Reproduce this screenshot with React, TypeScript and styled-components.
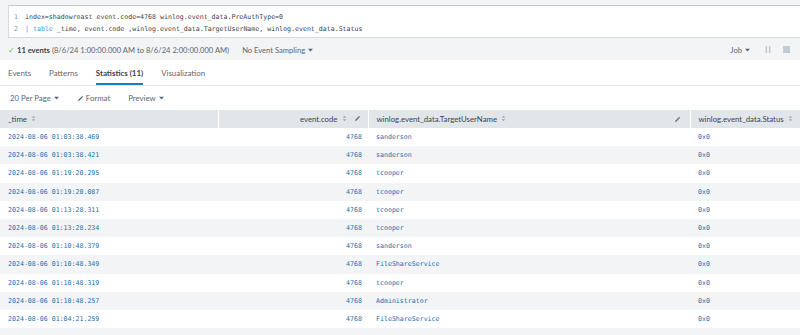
import styled, { createGlobalStyle } from 'styled-components';

const GlobalStyle = createGlobalStyle`
    html, body { margin: 0; padding: 0; background: #f2f4f5; }
    body { font-family: Lato, "Open Sans", sans-serif; color: #3c444d; }
`

const MONO = `"DejaVu Sans Mono", "Liberation Mono", monospace`

type Row = { time: string; code: string; user: string; status: string }

const rows: Row[] = [
    { time: '2024-08-06 01:03:38.469', code: '4768', user: 'sanderson', status: '0x0' },
    { time: '2024-08-06 01:03:38.421', code: '4768', user: 'sanderson', status: '0x0' },
    { time: '2024-08-06 01:19:20.295', code: '4768', user: 'tcooper', status: '0x0' },
    { time: '2024-08-06 01:19:20.087', code: '4768', user: 'tcooper', status: '0x0' },
    { time: '2024-08-06 01:13:28.311', code: '4768', user: 'tcooper', status: '0x0' },
    { time: '2024-08-06 01:13:28.234', code: '4768', user: 'tcooper', status: '0x0' },
    { time: '2024-08-06 01:10:48.379', code: '4768', user: 'sanderson', status: '0x0' },
    { time: '2024-08-06 01:10:48.349', code: '4768', user: 'FileShareService', status: '0x0' },
    { time: '2024-08-06 01:10:48.319', code: '4768', user: 'tcooper', status: '0x0' },
    { time: '2024-08-06 01:10:48.257', code: '4768', user: 'Administrator', status: '0x0' },
    { time: '2024-08-06 01:04:21.259', code: '4768', user: 'FileShareService', status: '0x0' },
]

const Caret = () => (
    <svg width="5" height="4" viewBox="0 0 6 4" style={{ marginLeft: 3 }}>
        <path d="M0 0.5 L6 0.5 L3 3.8 Z" fill="currentColor" />
    </svg>
)

const SortIcon = () => (
    <svg width="5" height="7" viewBox="0 0 5 7" style={{ marginLeft: 4 }}>
        <path d="M0.7 2.8 L2.5 0.8 L4.3 2.8 Z M0.7 4.2 L2.5 6.2 L4.3 4.2 Z" fill="#a0a8b0" />
    </svg>
)

const Pencil = () => (
    <svg width="7" height="7" viewBox="0 0 7 7">
        <path d="M1 6 L1.3 4.8 L5.2 0.9 L6.1 1.8 L2.2 5.7 Z" fill="#5c6773" />
    </svg>
)

export default function App() {
    return (
        <Page>
            <GlobalStyle />
            <SearchBox>
                <CodeLine><LineNo>1</LineNo>index=shadowroast event.code=4768 winlog.event_data.PreAuthType=0</CodeLine>
                <CodeLine><LineNo>2</LineNo><Pipe>|</Pipe> <Cmd>table</Cmd> _time, event.code ,winlog.event_data.TargetUserName, winlog.event_data.Status</CodeLine>
            </SearchBox>

            <StatusBar>
                <Check>✓</Check>
                <b>11 events</b>&nbsp;<Muted>(8/6/24 1:00:00.000 AM to 8/6/24 2:00:00.000 AM)</Muted>
                <Sampling>No Event Sampling<Caret /></Sampling>
                <Spacer />
                <JobMenu>Job<Caret /></JobMenu>
                <CtrlIcon>
                    <svg width="6" height="7" viewBox="0 0 6 7"><rect x="0.5" y="0" width="1.6" height="7" fill="#c3cbd4" /><rect x="3.9" y="0" width="1.6" height="7" fill="#c3cbd4" /></svg>
                </CtrlIcon>
                <CtrlIcon>
                    <svg width="7" height="7" viewBox="0 0 7 7"><rect x="0" y="0" width="7" height="7" fill="#c3cbd4" /></svg>
                </CtrlIcon>
            </StatusBar>

            <Tabs>
                <Tab>Events</Tab>
                <Tab>Patterns</Tab>
                <Tab $active>Statistics (11)</Tab>
                <Tab>Visualization</Tab>
            </Tabs>

            <Toolbar>
                <ToolItem>20 Per Page<Caret /></ToolItem>
                <ToolItem><Pencil />&nbsp;Format</ToolItem>
                <ToolItem>Preview<Caret /></ToolItem>
            </Toolbar>

            <Table>
                <thead>
                    <tr>
                        <Th $w={218}>_time<SortIcon /></Th>
                        <Th $w={150} $right>event.code<SortIcon /><EditGap><Pencil /></EditGap></Th>
                        <Th $w={322}>
                            <HeadFlex>
                                <span>winlog.event_data.TargetUserName<SortIcon /></span>
                                <Pencil />
                            </HeadFlex>
                        </Th>
                        <Th $w={110}>winlog.event_data.Status<SortIcon /></Th>
                    </tr>
                </thead>
                <tbody>
                    {rows.map((r, i) => (
                        <Tr key={i} $odd={i % 2 === 1}>
                            <Td>{r.time}</Td>
                            <Td $right>{r.code}</Td>
                            <Td>{r.user}</Td>
                            <Td>{r.status}</Td>
                        </Tr>
                    ))}
                </tbody>
            </Table>
        </Page>
    )
}

const Page = styled.div`
    width: 800px;
    height: 335px;
    overflow: hidden;
    padding-top: 5px;
    box-sizing: border-box;
`

const SearchBox = styled.div`
    margin-left: 8px;
    height: 33px;
    box-sizing: border-box;
    background: #fff;
    border-top: 1px solid #c3cbd4;
    border-bottom: 1px solid #d4dae0;
    border-left: 1px solid #d4dae0;
    padding-top: 5px;
    font-family: ${MONO};
    font-size: 6.6px;
    color: #3c444d;
`

const CodeLine = styled.div`
    height: 12px;
    line-height: 12px;
    white-space: pre;
`

const LineNo = styled.span`
    display: inline-block;
    width: 16px;
    padding-left: 5px;
    box-sizing: border-box;
    color: #8a949d;
`

const Pipe = styled.span` color: #3b9ee0; `
const Cmd = styled.span` color: #3b9ee0; `

const StatusBar = styled.div`
    height: 22px;
    display: flex;
    align-items: center;
    padding: 1px 10px 0 8px;
    box-sizing: border-box;
    font-size: 7.6px;
    color: #3c444d;
    b { font-weight: 700; }
`

const Check = styled.span`
    color: #5cc05c;
    font-size: 7.6px;
    margin-right: 2px;
`

const Muted = styled.span` color: #5c6773; `

const Sampling = styled.span`
    margin-left: 13px;
    display: flex;
    align-items: center;
    color: #5c6773;
`

const Spacer = styled.div` flex: 1; `

const JobMenu = styled.span`
    display: flex;
    align-items: center;
    color: #5c6773;
    margin-right: 3px;
`

const CtrlIcon = styled.span`
    display: flex;
    align-items: center;
    margin-left: 12px;
`

const Tabs = styled.div`
    height: 26px;
    background: #fff;
    display: flex;
    padding-left: 8px;
    gap: 18px;
    border-bottom: 1px solid #e1e6eb;
    box-sizing: border-box;
`

const Tab = styled.div<{ $active?: boolean }>`
    font-size: 7.9px;
    padding-top: 3px;
    line-height: 20px;
    color: ${p => (p.$active ? '#3c444d' : '#5c6773')};
    font-weight: ${p => (p.$active ? 700 : 400)};
    border-bottom: 2px solid ${p => (p.$active ? '#1a7cc1' : 'transparent')};
`

const Toolbar = styled.div`
    height: 24px;
    background: #fff;
    display: flex;
    align-items: center;
    padding-left: 10px;
    gap: 18px;
`

const ToolItem = styled.span`
    display: flex;
    align-items: center;
    font-size: 7.8px;
    color: #5c6773;
`

const Table = styled.table`
    width: 800px;
    border-collapse: collapse;
    table-layout: fixed;
    background: #fff;
`

const Th = styled.th<{ $w: number; $right?: boolean }>`
    width: ${p => p.$w}px;
    height: 18px;
    padding: 0 7px 0 8px;
    box-sizing: border-box;
    background: #e1e6eb;
    border-left: 1px solid #fff;
    &:first-child { border-left: none; }
    text-align: ${p => (p.$right ? 'right' : 'left')};
    font-size: 7.8px;
    font-weight: 400;
    color: #3c444d;
    white-space: nowrap;
`

const HeadFlex = styled.div`
    display: flex;
    justify-content: space-between;
    align-items: center;
    padding-right: 2px;
`

const EditGap = styled.span` margin-left: 7px; `

const Tr = styled.tr<{ $odd: boolean }>`
    background: ${p => (p.$odd ? '#f2f4f5' : '#fff')};
`

const Td = styled.td<{ $right?: boolean }>`
    height: 18.2px;
    padding: 0 6px 0 8px;
    box-sizing: border-box;
    font-family: ${MONO};
    font-size: 6.6px;
    color: #1a6fae;
    text-align: ${p => (p.$right ? 'right' : 'left')};
    white-space: nowrap;
`
